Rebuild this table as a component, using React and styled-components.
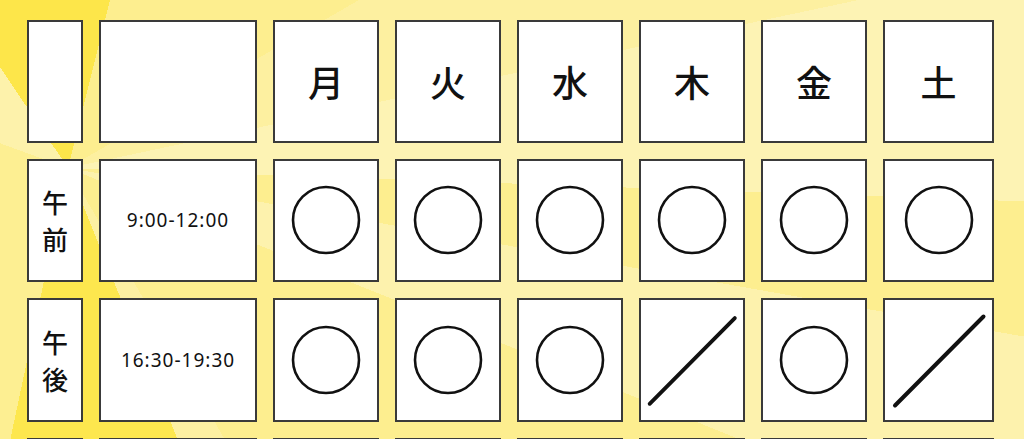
import React from 'react';
import styled, { createGlobalStyle } from 'styled-components';

const GlobalStyle = createGlobalStyle`
  html, body {
    margin: 0;
    padding: 0;
    height: 100%;
  }
  body {
    font-family: "Noto Sans", "Noto Sans CJK JP", sans-serif;
    color: #111;
    overflow: hidden;
  }
`;

const days = ['月', '火', '水', '木', '金', '土'];

const rows = [
  { label: ['午', '前'], time: '9:00-12:00', marks: ['o', 'o', 'o', 'o', 'o', 'o'] },
  { label: ['午', '後'], time: '16:30-19:30', marks: ['o', 'o', 'o', 'x', 'o', 'x'] },
  { label: [], time: '', marks: ['', '', '', '', '', ''] },
];

const Circle = () => (
  <svg width="72" height="72" viewBox="0 0 72 72">
    <circle cx="36" cy="36" r="33" fill="none" stroke="#111" strokeWidth="2.6" />
  </svg>
);

const Slash = () => (
  <svg width="106" height="124" viewBox="0 0 106 124">
    <line x1="9" y1="107.5" x2="97.5" y2="18.5" stroke="#111" strokeWidth="4" strokeLinecap="round" />
  </svg>
);

const App = () => {
  return (
    <>
      <GlobalStyle />
      <Page>
        <Table>
          <Cell />
          <Cell />
          {days.map(d => (
            <Cell key={d}>
              <Day>{d}</Day>
            </Cell>
          ))}
          {rows.map((r, i) => (
            <React.Fragment key={i}>
              <Cell>
                <Period>
                  {r.label.map(c => (
                    <span key={c}>{c}</span>
                  ))}
                </Period>
              </Cell>
              <Cell>
                <Time>{r.time}</Time>
              </Cell>
              {r.marks.map((m, j) => (
                <Cell key={j}>
                  {m === 'o' && <Circle />}
                  {m === 'x' && <Slash />}
                </Cell>
              ))}
            </React.Fragment>
          ))}
        </Table>
      </Page>
    </>
  );
};

export default App;

const Page = styled.div`
  width: 1024px;
  height: 439px;
  overflow: hidden;
  box-sizing: border-box;
  padding: 20px 0 0 27px;
  background:
    conic-gradient(
      from 0deg at 68px 168px,
      #fde64a 0deg 14deg,
      #fdee8f 14deg 60deg,
      #fdf0a0 60deg 78deg,
      #fdf3b4 78deg 92deg,
      #fdee8f 92deg 100deg,
      #fdf2ad 100deg 112deg,
      #fdee8f 112deg 150deg,
      #fdf0a2 150deg 158deg,
      #fde74e 158deg 192deg,
      #fdef92 192deg 290deg,
      #fdf2ab 290deg 326deg,
      #fde64a 326deg 360deg
    );
`;

const Table = styled.div`
  display: grid;
  grid-template-columns: 56px 158px repeat(5, 106px) 111px;
  grid-template-rows: 122.5px 123.5px 123.5px 123.5px;
  column-gap: 16px;
  row-gap: 16px;
`;

const Cell = styled.div`
  box-sizing: border-box;
  background: #fff;
  border: 2px solid #3a3a3a;
  display: flex;
  align-items: center;
  justify-content: center;
  overflow: hidden;
`;

const Day = styled.div`
  font-family: "Noto Sans CJK JP", sans-serif;
  font-size: 36px;
  font-weight: 500;
  line-height: 1;
`;

const Period = styled.div`
  display: flex;
  flex-direction: column;
  align-items: center;
  font-family: "Noto Sans CJK JP", sans-serif;
  font-size: 26px;
  font-weight: 500;
  line-height: 37px;
`;

const Time = styled.div`
  font-family: "Noto Sans", sans-serif;
  font-size: 19px;
  letter-spacing: 1px;
`;
